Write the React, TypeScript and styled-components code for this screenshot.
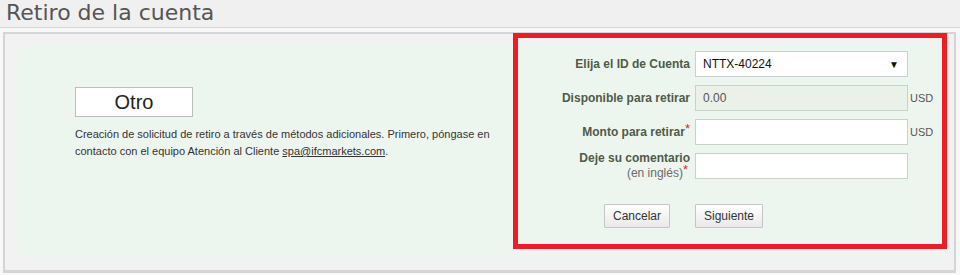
import React from "react";
import styled, { createGlobalStyle } from "styled-components";

const Global = createGlobalStyle`
  html, body { margin: 0; padding: 0; background: #f8f8f8; }
  body { font-family: "Liberation Sans", Arial, sans-serif; width: 960px; height: 275px; overflow: hidden; }
  * { box-sizing: border-box; }
`;

const Page = styled.div`
  display: flex;
  flex-direction: column;
  width: 960px;
`;

const TitleBar = styled.div`
  height: 28px;
  background: #f0f0f0;
  border-bottom: 1px solid #d6d6d6;
  padding-left: 6px;
  display: flex;
  align-items: center;
`;

const Title = styled.h1`
  margin: 0;
  font-family: "DejaVu Sans", Verdana, sans-serif;
  font-weight: normal;
  font-size: 22px;
  color: #555;
  line-height: 24px;
  margin-top: -2px;
`;

const Panel = styled.div`
  margin: 4px 4px 0 3px;
  border: 2px solid #d5d5d5;
  border-bottom-width: 3px;
  background: #f2f2f2;
  padding: 11px 8px 13px 12px;
`;

const Content = styled.div`
  position: relative;
  display: flex;
  height: 212px;
  background: #edf6ee;
`;

const Highlight = styled.div`
  position: absolute;
  left: 496px;
  top: -12px;
  width: 434px;
  height: 216px;
  border: 5px solid #ee1c25;
  pointer-events: none;
`;

const InfoColumn = styled.div`
  width: 496px;
  padding: 42px 0 0 58px;
  display: flex;
  flex-direction: column;
  align-items: flex-start;
`;

const MethodBox = styled.div`
  width: 118px;
  height: 30px;
  background: #fff;
  border: 1px solid #bdbdbd;
  display: flex;
  align-items: center;
  justify-content: center;
  font-size: 20px;
  color: #222;
`;

const Description = styled.p`
  margin: 9px 0 0;
  width: 420px;
  font-size: 11px;
  line-height: 17px;
  color: #333;
`;

const Link = styled.a`
  color: #333;
  text-decoration: underline;
`;

const FormColumn = styled.div`
  width: 432px;
  padding: 6px 0 0 9px;
`;

const Grid = styled.div`
  display: grid;
  grid-template-columns: 173px 213px auto;
  grid-auto-rows: 26px;
  row-gap: 8px;
  align-items: center;
`;

const Label = styled.label`
  justify-self: end;
  padding-right: 5px;
  font-size: 12px;
  font-weight: bold;
  color: #4f5a47;
  text-align: right;
  line-height: 15px;
  white-space: nowrap;
`;

const Sub = styled.span`
  display: block;
  font-weight: normal;
  color: #6a6a6a;
  padding-right: 2px;
`;

const Req = styled.sup`
  color: #e2262b;
  font-size: 13px;
  font-weight: normal;
  line-height: 0;
  vertical-align: 3px;
`;

const Field = styled.div<{ $disabled?: boolean; $select?: boolean }>`
  height: 26px;
  display: flex;
  align-items: center;
  justify-content: space-between;
  padding: 0 8px 0 7px;
  font-size: 12px;
  color: ${(p) => (p.$disabled ? "#555" : "#111")};
  background: ${(p) => (p.$disabled ? "#e9f1e8" : "#fff")};
  border: 1px solid ${(p) => (p.$select ? "#c4d0dd" : "#c4d5c6")};
`;

const Arrow = styled.span`
  font-size: 10px;
  color: #111;
`;

const Unit = styled.span`
  font-size: 11px;
  color: #555;
  padding-left: 2px;
`;

const ButtonCell = styled.div<{ $end?: boolean }>`
  display: flex;
  justify-content: ${(p) => (p.$end ? "flex-end" : "flex-start")};
  padding-right: ${(p) => (p.$end ? "25px" : "0")};
  align-self: start;
  margin-top: 17px;
`;

const Button = styled.button`
  height: 24px;
  padding: 0 8px;
  font-family: "Liberation Sans", Arial, sans-serif;
  font-size: 12px;
  color: #333;
  background: linear-gradient(#ffffff, #e9e9e9);
  border: 1px solid #c5c5c5;
  border-radius: 1px;
`;

export default function App() {
  return (
    <Page>
      <Global />
      <TitleBar>
        <Title>Retiro de la cuenta</Title>
      </TitleBar>
      <Panel>
        <Content>
          <InfoColumn>
            <MethodBox>Otro</MethodBox>
            <Description>
              Creación de solicitud de retiro a través de métodos adicionales. Primero, póngase en
              contacto con el equipo Atención al Cliente <Link href="#">spa@ifcmarkets.com</Link>.
            </Description>
          </InfoColumn>
          <FormColumn>
            <Grid>
              <Label>Elija el ID de Cuenta</Label>
              <Field $select>
                NTTX-40224
                <Arrow>▼</Arrow>
              </Field>
              <span />
              <Label>Disponible para retirar</Label>
              <Field $disabled>0.00</Field>
              <Unit>USD</Unit>
              <Label>
                Monto para retirar<Req>*</Req>
              </Label>
              <Field />
              <Unit>USD</Unit>
              <Label>
                Deje su comentario
                <Sub>
                  (en inglés)<Req>*</Req>
                </Sub>
              </Label>
              <Field />
              <span />
              <ButtonCell $end>
                <Button>Cancelar</Button>
              </ButtonCell>
              <ButtonCell>
                <Button>Siguiente</Button>
              </ButtonCell>
            </Grid>
          </FormColumn>
          <Highlight />
        </Content>
      </Panel>
    </Page>
  );
}
